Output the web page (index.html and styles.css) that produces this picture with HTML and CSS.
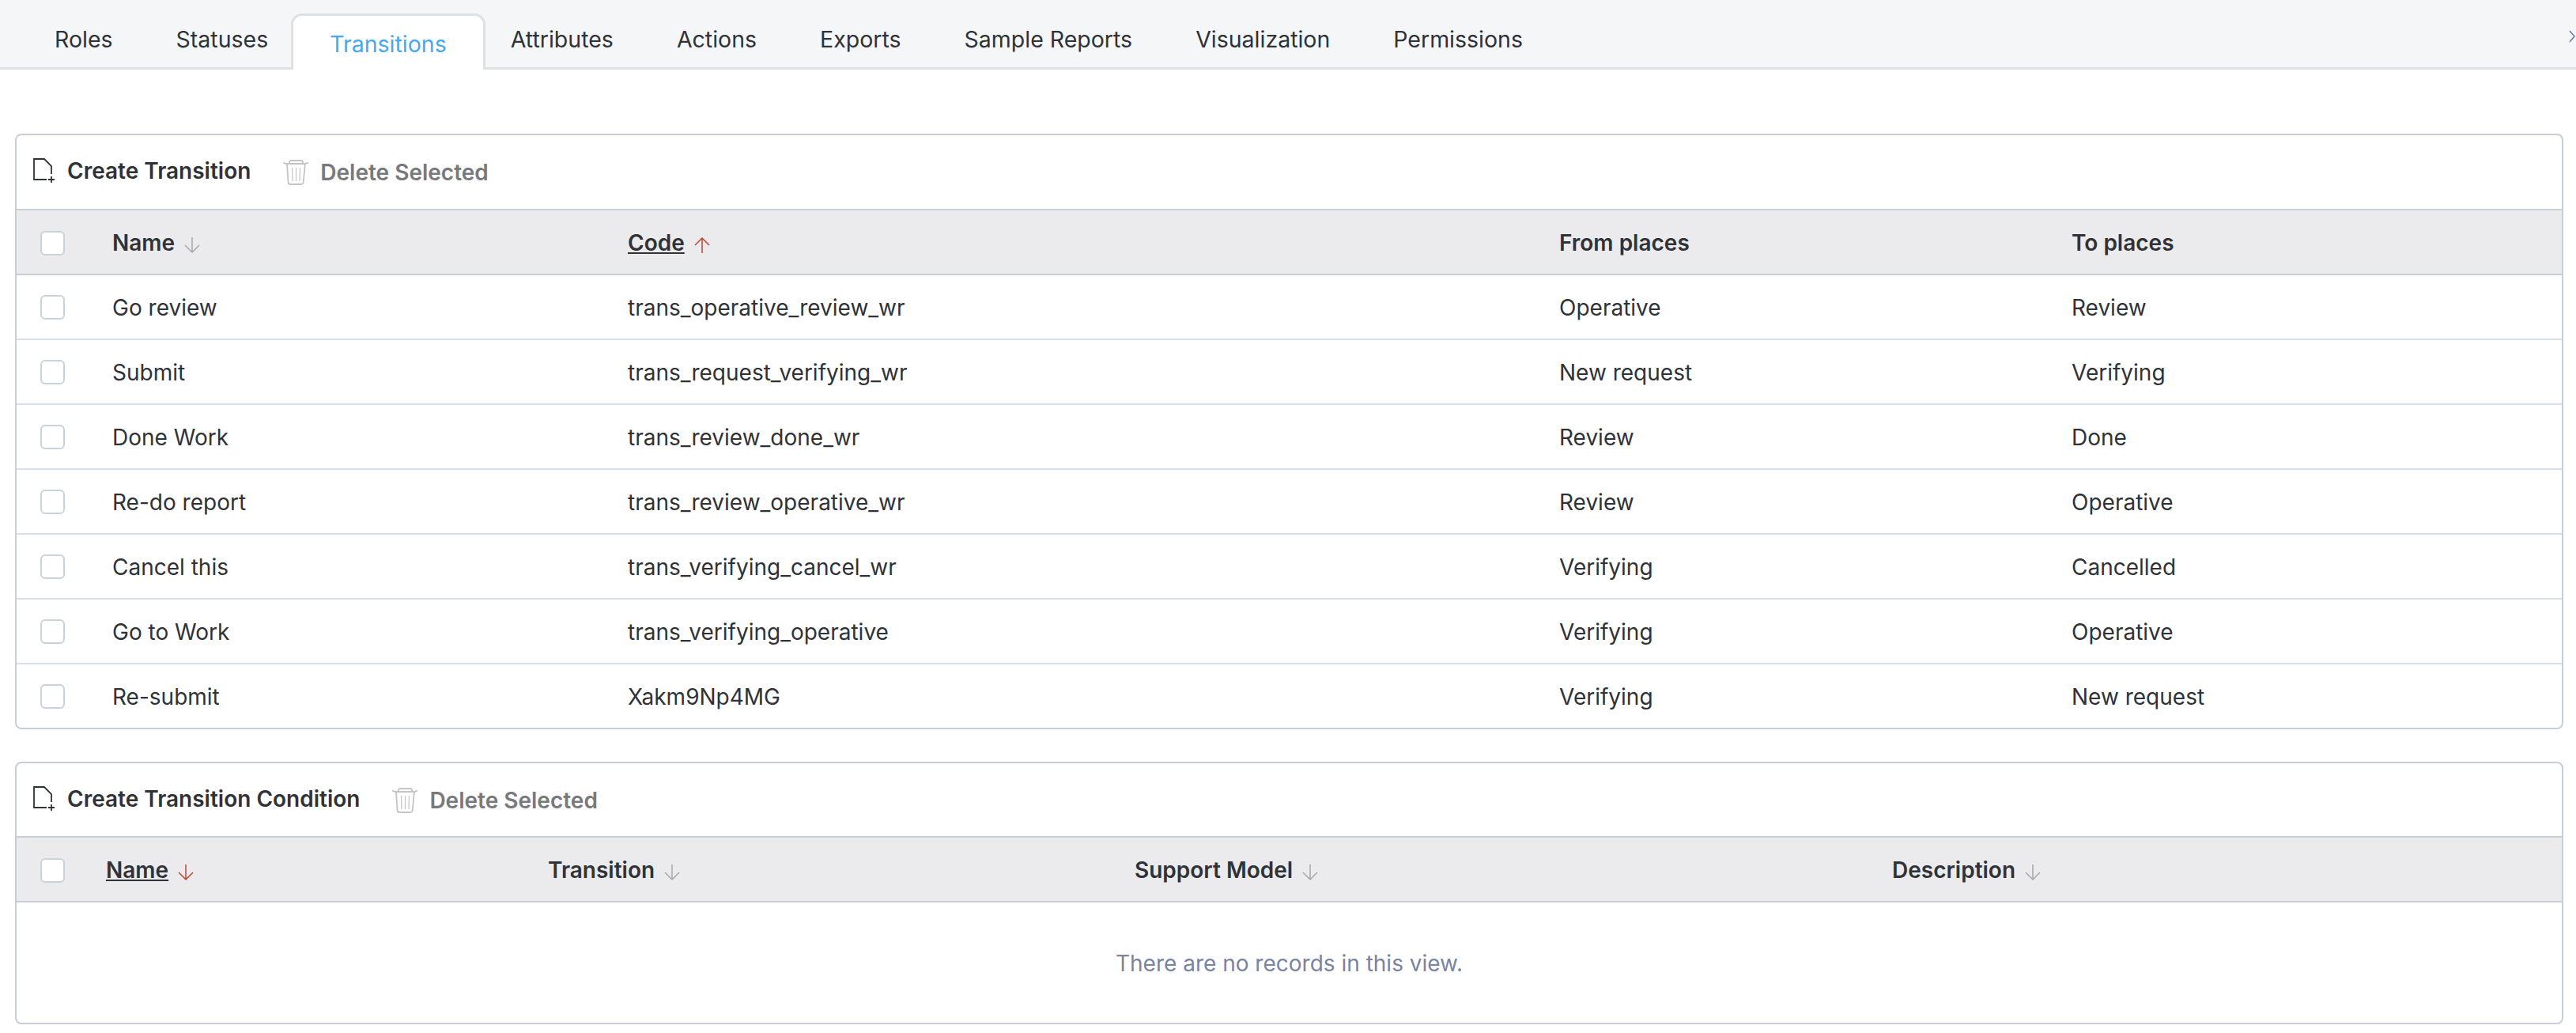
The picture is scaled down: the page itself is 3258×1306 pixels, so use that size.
FILE: index.html
```html
<!DOCTYPE html>
<html lang="en">
<head>
    <meta charset="UTF-8">
    <title>Transitions</title>
    <link rel="stylesheet" href="styles.css">
</head>
<body>
    <svg class="icon-defs" width="0" height="0">
        <symbol id="icon-new" viewBox="0 0 28 32">
            <path d="M17 27H1V1H14L23 10V20" fill="none" stroke="currentColor" stroke-width="1.800"/>
            <path d="M23 23V31M19 27H27" fill="none" stroke="currentColor" stroke-width="1.800"/>
        </symbol>
        <symbol id="icon-trash" viewBox="0 0 32 32">
            <path d="M0 3.500L4 5H28L32 3.500M8 4.500V3C8 1.500 9 1 10 1H23C24 1 25 1.500 25 3V4.500" fill="none" stroke="currentColor" stroke-width="1.800"/>
            <path d="M5 5L6.500 28C6.500 30 7.500 31 9.500 31H23C25 31 25.500 30 25.700 28L28 5" fill="none" stroke="currentColor" stroke-width="1.800"/>
            <path d="M11.500 10L12 27M16.500 10V27M21.500 10L21 27" fill="none" stroke="currentColor" stroke-width="1.200"/>
        </symbol>
        <symbol id="arrow-down" viewBox="0 0 20 22">
            <path d="M10 1V20M1 11L10 20L19 11" fill="none" stroke="currentColor" stroke-width="1.500"/>
        </symbol>
        <symbol id="arrow-up" viewBox="0 0 20 22">
            <path d="M10 21V2M1 11L10 2L19 11" fill="none" stroke="currentColor" stroke-width="1.500"/>
        </symbol>
    </svg>

    <nav class="tabs">
        <a class="tab">Roles</a>
        <a class="tab">Statuses</a>
        <a class="tab active">Transitions</a>
        <a class="tab">Attributes</a>
        <a class="tab">Actions</a>
        <a class="tab">Exports</a>
        <a class="tab">Sample Reports</a>
        <a class="tab">Visualization</a>
        <a class="tab">Permissions</a>
        <svg class="tabs-next" viewBox="0 0 8 16"><path d="M1 1L7 8L1 15" fill="none" stroke="currentColor" stroke-width="1.500"/></svg>
    </nav>

    <main class="content">
        <section class="card">
            <div class="toolbar">
                <button class="tool-btn"><svg class="tool-icon"><use href="#icon-new"/></svg>Create Transition</button>
                <button class="tool-btn disabled"><svg class="trash-icon"><use href="#icon-trash"/></svg>Delete Selected</button>
            </div>
            <table class="grid transitions">
                <colgroup><col class="c-check"><col class="c-name"><col class="c-code"><col class="c-from"><col></colgroup>
                <thead>
                    <tr>
                        <th><span class="check"></span></th>
                        <th>Name <svg class="sort"><use href="#arrow-down"/></svg></th>
                        <th><u>Code</u> <svg class="sort on"><use href="#arrow-up"/></svg></th>
                        <th>From places</th>
                        <th>To places</th>
                    </tr>
                </thead>
                <tbody>
                    <tr><td><span class="check"></span></td><td>Go review</td><td>trans_operative_review_wr</td><td>Operative</td><td>Review</td></tr>
                    <tr><td><span class="check"></span></td><td>Submit</td><td>trans_request_verifying_wr</td><td>New request</td><td>Verifying</td></tr>
                    <tr><td><span class="check"></span></td><td>Done Work</td><td>trans_review_done_wr</td><td>Review</td><td>Done</td></tr>
                    <tr><td><span class="check"></span></td><td>Re-do report</td><td>trans_review_operative_wr</td><td>Review</td><td>Operative</td></tr>
                    <tr><td><span class="check"></span></td><td>Cancel this</td><td>trans_verifying_cancel_wr</td><td>Verifying</td><td>Cancelled</td></tr>
                    <tr><td><span class="check"></span></td><td>Go to Work</td><td>trans_verifying_operative</td><td>Verifying</td><td>Operative</td></tr>
                    <tr><td><span class="check"></span></td><td>Re-submit</td><td>Xakm9Np4MG</td><td>Verifying</td><td>New request</td></tr>
                </tbody>
            </table>
        </section>

        <section class="card">
            <div class="toolbar">
                <button class="tool-btn"><svg class="tool-icon"><use href="#icon-new"/></svg>Create Transition Condition</button>
                <button class="tool-btn disabled"><svg class="trash-icon"><use href="#icon-trash"/></svg>Delete Selected</button>
            </div>
            <table class="grid conditions">
                <colgroup><col class="c-check"><col class="c-name"><col class="c-trans"><col class="c-model"><col></colgroup>
                <thead>
                    <tr>
                        <th><span class="check"></span></th>
                        <th><u>Name</u> <svg class="sort on"><use href="#arrow-down"/></svg></th>
                        <th>Transition <svg class="sort"><use href="#arrow-down"/></svg></th>
                        <th>Support Model <svg class="sort"><use href="#arrow-down"/></svg></th>
                        <th>Description <svg class="sort"><use href="#arrow-down"/></svg></th>
                    </tr>
                </thead>
            </table>
            <div class="empty">There are no records in this view.</div>
        </section>
    </main>
</body>
</html>
```

FILE: styles.css
```css
body {
    margin: 0;
    font-family: Inter, "Liberation Sans", sans-serif;
    font-size: 28px;
    color: #2f3237;
    background-color: #FFFFFF;
}
.icon-defs {
    display: block;
    height: 0;
}
.tabs {
    display: flex;
    align-items: stretch;
    height: 85px;
    padding-left: 29px;
    padding-right: 1px;
    background-color: #f5f6f8;
    border-bottom: 3px solid #dfe0e4;
    font-size: 28.500px;
}
.tab {
    display: flex;
    align-items: center;
    padding: 19px 40px 6px;
    white-space: nowrap;
}
.tab.active {
    height: 66px;
    margin: 17px -8px -3px -11px;
    padding: 2px 46px 0;
    background-color: #FFFFFF;
    border: 3px solid #dfe0e4;
    border-bottom: none;
    border-radius: 14px 14px 0 0;
    color: #45a9ee;
}
.tabs-next {
    width: 8px;
    height: 16px;
    margin: 38px 0 0 auto;
    color: #6b7a99;
}
.content {
    display: flex;
    flex-direction: column;
    gap: 41px;
    padding: 81px 16px 0 19px;
}
.card {
    border: 2px solid #c6ced7;
    border-radius: 8px;
    overflow: hidden;
}
.toolbar {
    display: flex;
    align-items: center;
    gap: 41px;
    height: 93px;
    padding: 0 0 4px 21px;
    box-sizing: border-box;
}
.card + .card .toolbar {
    height: 92px;
    padding-bottom: 3px;
}
.tool-btn {
    display: flex;
    align-items: center;
    gap: 15px;
    padding: 0;
    border: none;
    background: none;
    font: inherit;
    font-weight: 600;
    color: #2f3237;
}
.tool-btn.disabled {
    position: relative;
    top: 2px;
    color: #77797c;
}
.tool-icon {
    width: 28px;
    height: 32px;
}
.trash-icon {
    width: 32px;
    height: 32px;
    color: #c4c4c4;
}
.grid {
    width: 100%;
    table-layout: fixed;
    border-collapse: separate;
    border-spacing: 0;
}
.transitions .c-check { width: 121px; }
.transitions .c-name { width: 652px; }
.transitions .c-code { width: 1178px; }
.transitions .c-from { width: 648px; }
.conditions .c-check { width: 113px; }
.conditions .c-name { width: 559px; }
.conditions .c-trans { width: 742px; }
.conditions .c-model { width: 958px; }
.grid th {
    height: 84px;
    padding: 2px 0 0;
    box-sizing: border-box;
    background-color: #ebebee;
    border-top: 2px solid #c6ced7;
    border-bottom: 2px solid #c6ced7;
    font-weight: 600;
    text-align: left;
}
.grid td {
    height: 82px;
    padding: 2px 0 0;
    box-sizing: border-box;
    border-bottom: 2px solid #d8e0ea;
}
.grid tbody tr:last-child td {
    height: 80px;
    border-bottom: none;
}
.check {
    display: block;
    width: 31px;
    height: 31px;
    margin-left: 30px;
    box-sizing: border-box;
    background-color: #FFFFFF;
    border: 2px solid #c8d3dc;
    border-radius: 6px;
}
.grid td .check {
    margin-top: -2px;
}
.sort {
    width: 20px;
    height: 22px;
    margin-left: 5px;
    vertical-align: -4px;
    color: #a8a8a8;
}
.sort.on {
    color: #c0452f;
}
.empty {
    display: flex;
    align-items: center;
    justify-content: center;
    height: 152px;
    padding-top: 1px;
    box-sizing: border-box;
    color: #7a83a3;
}
```
